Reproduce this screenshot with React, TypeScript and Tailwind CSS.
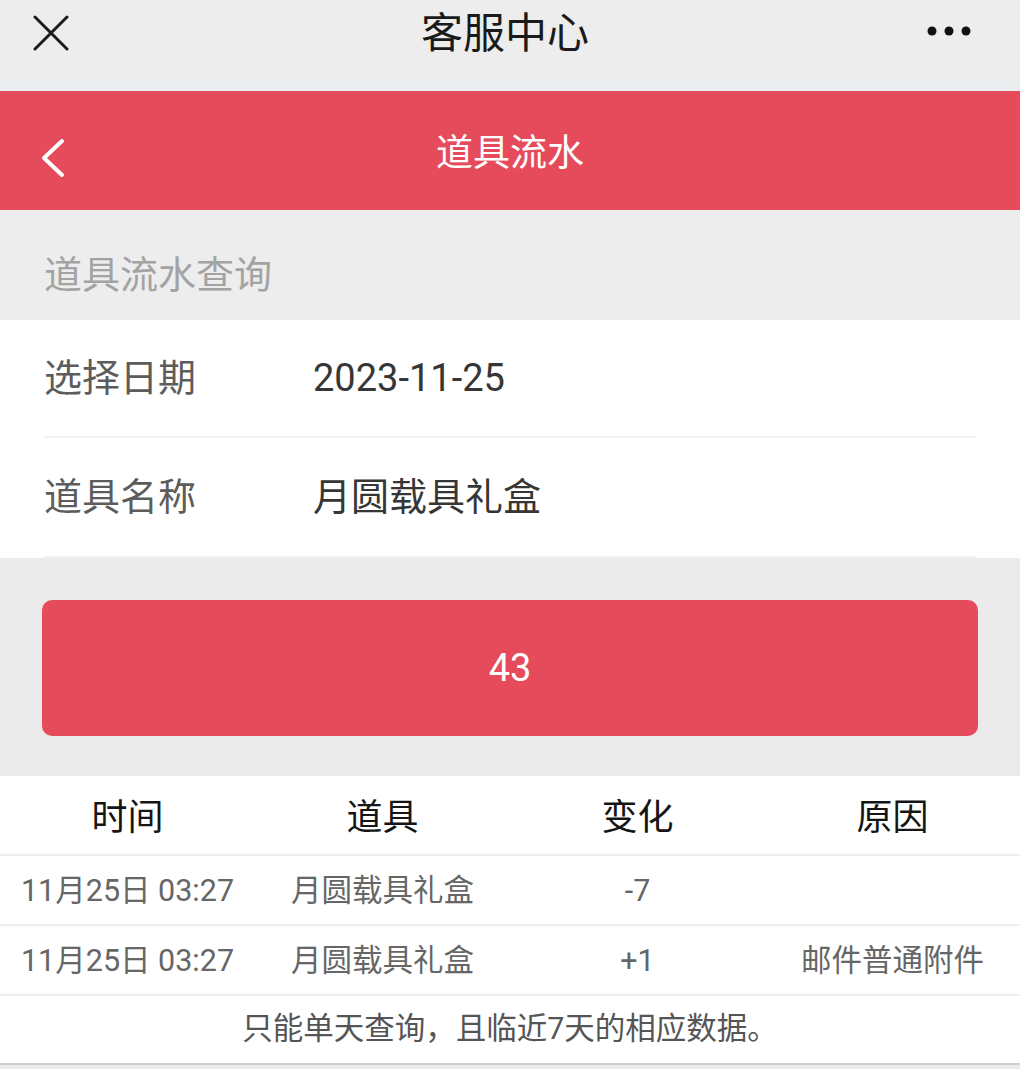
import React from 'react';

const rows = [
  { time: '11月25日 03:27', item: '月圆载具礼盒', change: '-7', reason: '' },
  { time: '11月25日 03:27', item: '月圆载具礼盒', change: '+1', reason: '邮件普通附件' },
];

const font = "font-['Roboto','Noto_Sans_CJK_SC',sans-serif]";

export default function App() {
  return (
    <div className={`w-[1020px] h-[1069px] bg-[#ebebeb] overflow-hidden ${font}`}>
      {/* wechat top bar */}
      <div className="relative h-[80px] bg-[#ededed] flex items-center justify-between px-[33px]">
        <svg width="36" height="36" viewBox="0 0 36 36" className="-mt-[15px]">
          <path d="M2 2 L34 34 M34 2 L2 34" stroke="#1c1c1c" strokeWidth="3" strokeLinecap="round" />
        </svg>
        <div className="absolute left-0 right-0 top-[13px] text-center text-[42px] leading-none text-[#1a1a1a] -ml-[10px]">
          客服中心
        </div>
        <svg width="46" height="12" viewBox="0 0 46 12" className="-mt-[18px] mr-[15px]">
          <circle cx="6" cy="6" r="4.5" fill="#111" />
          <circle cx="23" cy="6" r="4.5" fill="#111" />
          <circle cx="40" cy="6" r="4.5" fill="#111" />
        </svg>
      </div>
      <div className="h-[11px] bg-[#e9eded]" />

      {/* red header */}
      <div className="relative h-[119px] bg-[#e54b5b] flex items-center justify-center">
        <svg width="26" height="40" viewBox="0 0 26 40" className="absolute left-[40px] top-[47px]">
          <path d="M22 3 L4 20 L22 37" stroke="#fff" strokeWidth="4" fill="none" strokeLinecap="round" strokeLinejoin="round" />
        </svg>
        <div className="text-[37px] leading-none text-white mt-[6px]">道具流水</div>
      </div>

      {/* section title */}
      <div className="h-[110px] bg-[#ededed] flex items-center px-[44px]">
        <div className="text-[38px] leading-none text-[#a3a3a3] mt-[20px]">道具流水查询</div>
      </div>

      {/* form */}
      <div className="bg-white">
        <div className="mx-[44px] h-[118px] border-b-2 border-[#f1f1f1] flex items-center">
          <div className="w-[269px] text-[38px] leading-none text-[#5c5c5c]">选择日期</div>
          <div className="text-[38px] leading-none text-[#363636]">2023-11-25</div>
        </div>
        <div className="mx-[44px] h-[120px] border-b-2 border-[#f3f3f3] flex items-center">
          <div className="w-[269px] text-[38px] leading-none text-[#5c5c5c]">道具名称</div>
          <div className="text-[38px] leading-none text-[#363636]">月圆载具礼盒</div>
        </div>
      </div>

      {/* button */}
      <div className="bg-[#ebebeb] pt-[42px] pb-[40px] px-[42px]">
        <div className="h-[136px] rounded-[10px] bg-[#e54b5b] flex items-center justify-center">
          <span className="text-[38px] leading-none text-white">43</span>
        </div>
      </div>

      {/* table */}
      <div className="bg-white">
        <div className="grid grid-cols-4 h-[80px] pt-[6px] border-b-2 border-[#eeeeee] items-center text-center text-[36px] leading-none text-[#151515]">
          <div>时间</div>
          <div>道具</div>
          <div>变化</div>
          <div>原因</div>
        </div>
        {rows.map((r, i) => (
          <div
            key={i}
            className="grid grid-cols-4 h-[70px] pt-[2px] border-b-2 border-[#eeeeee] items-center text-center text-[30.5px] leading-none text-[#666666]"
          >
            <div>{r.time}</div>
            <div>{r.item}</div>
            <div>{r.change}</div>
            <div>{r.reason}</div>
          </div>
        ))}
        <div className="h-[69px] border-b-2 border-[#cfcfcf] flex items-center justify-center text-[30.5px] leading-none text-[#555555]">
          只能单天查询，且临近7天的相应数据。
        </div>
      </div>
    </div>
  );
}
